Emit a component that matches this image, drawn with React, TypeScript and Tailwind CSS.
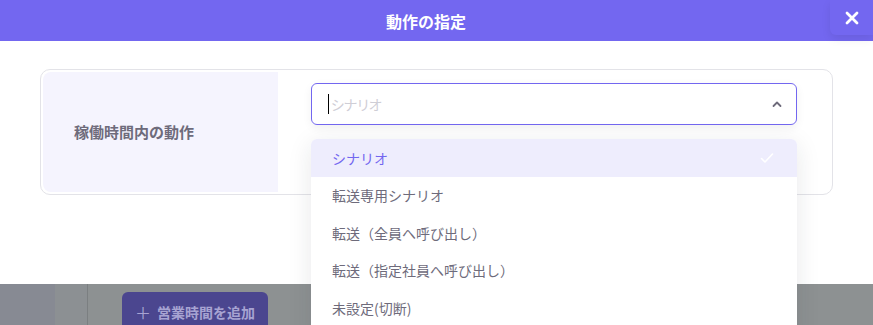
import React from "react";

const font = { fontFamily: '"Noto Sans CJK JP", "Noto Sans", sans-serif' };

export default function App() {
  const items = ["シナリオ", "転送専用シナリオ", "転送（全員へ呼び出し）", "転送（指定社員へ呼び出し）", "未設定(切断)"];
  return (
    <div className="relative w-[873px] h-[325px] overflow-hidden bg-white" style={font}>
      <div className="relative h-[41px] bg-[#7367f0] flex items-center justify-center pr-[21px]">
        <span className="text-white text-[16px] font-bold">動作の指定</span>
        <button className="absolute right-0 top-0 w-[43px] h-[35px] bg-[#7367f0] rounded-bl-md shadow-[0_4px_10px_rgba(0,0,0,0.08)] flex items-center justify-center">
          <svg width="16" height="16" viewBox="0 0 16 16" fill="none" stroke="white" strokeWidth="2.8" strokeLinecap="round">
            <path d="M3 3 L13 13 M13 3 L3 13" />
          </svg>
        </button>
      </div>
      <div className="h-[243px] pt-[28px] px-[40px]">
        <div className="flex h-[126px] border border-[#e3e3e8] rounded-[10px] p-[2px]">
          <div className="w-[235px] bg-[#f5f4fe] rounded-l-[8px] flex items-center pl-[31px]">
            <span className="text-[15px] font-bold text-[#6e6b7b]">稼働時間内の動作</span>
          </div>
          <div className="flex-1 pl-[33px] pr-[33px] pt-[11px]">
            <div className="h-[42px] border border-[#7367f0] rounded-[6px] flex items-center pl-[16px] pr-[13px] shadow-[0_3px_10px_rgba(0,0,0,0.06)]">
              <span className="w-[1px] h-[20px] bg-black mr-[2px]" />
              <span className="flex-1 text-[14px] text-[#cfced6]" style={{ fontFeatureSettings: '"palt"' }}>シナリオ</span>
              <svg width="12" height="8" viewBox="0 0 12 8" fill="none" stroke="#6e6b7b" strokeWidth="1.8" strokeLinecap="round" strokeLinejoin="round">
                <path d="M2.5 6 L6 2.5 L9.5 6" />
              </svg>
            </div>
          </div>
        </div>
      </div>
      <div className="h-[41px] flex bg-[#8d9192]">
        <div className="w-[55px] bg-[#878a93]" />
        <div className="w-[33px] bg-[#8c9093] border-r border-[#7b7f81]" />
        <div className="pl-[34px] pt-[8px]">
          <div className="w-[146px] h-[40px] bg-[#4b468f] rounded-md flex items-center justify-center gap-[6px] text-[#a7a3d2] text-[14px] font-bold">
            <span className="text-[16px] font-normal">＋</span>
            <span>営業時間を追加</span>
          </div>
        </div>
      </div>
      <div className="absolute left-[311px] top-[139px] w-[486px] h-[200px] bg-white rounded-[6px] shadow-[0_5px_25px_rgba(34,41,47,0.1)] overflow-hidden">
        {items.map((t, i) => (
          <div
            key={t}
            className={
              i === 0
                ? "h-[38px] bg-[#eeedfd] flex items-center pl-[21px] pr-[23px] text-[14px] text-[#7367f0]"
                : "h-[37.5px] flex items-center pl-[21px] text-[14px] text-[#6e6b7b]"
            }
          >
            <span className="flex-1">{t}</span>
            {i === 0 && (
              <svg width="14" height="12" viewBox="0 0 14 12" fill="none" stroke="white" strokeWidth="1.6" strokeLinecap="round" strokeLinejoin="round">
                <path d="M1.5 6.5 L5 10 L12.5 2" />
              </svg>
            )}
          </div>
        ))}
      </div>
    </div>
  );
}
